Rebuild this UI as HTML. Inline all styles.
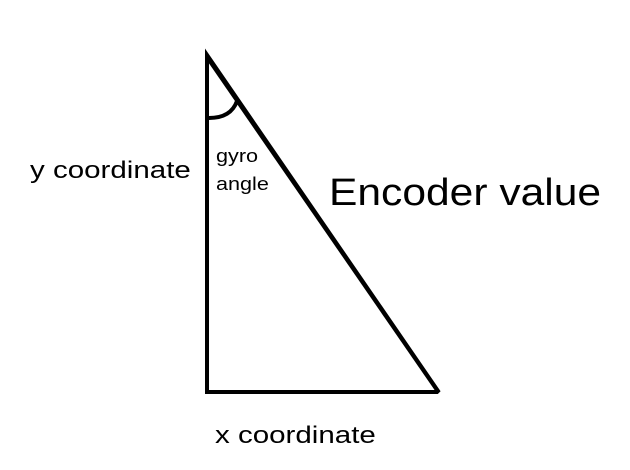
<!DOCTYPE html>
<html><head><style>
html,body{margin:0;padding:0;background:#fff;}
body{width:630px;height:470px;position:relative;overflow:hidden;font-family:"Liberation Sans",sans-serif;color:#000;}
.t{position:absolute;white-space:nowrap;line-height:1;transform-origin:0 50%;}
</style></head><body>
<svg width="630" height="470" style="position:absolute;left:0;top:0">
<g stroke="#000" stroke-width="4" fill="none">
<path d="M207 55 L207 392 L437 392 L438 391 Z" stroke-linejoin="miter"/>
<path d="M207 57 L437 390"/>
<path d="M209 118 Q231 118 237 101"/>
</g>
</svg>
<div class="t" style="left:30px;top:159px;font-size:24px;transform:scaleX(1.23);">y coordinate</div>
<div class="t" style="left:216px;top:147px;font-size:18px;transform:scaleX(1.2);">gyro</div>
<div class="t" style="left:216px;top:175px;font-size:18px;transform:scaleX(1.2);">angle</div>
<div class="t" style="left:329px;top:174px;font-size:38px;transform:scaleX(1.12);">Encoder value</div>
<div class="t" style="left:215px;top:424px;font-size:24px;transform:scaleX(1.23);">x coordinate</div>
</body></html>
